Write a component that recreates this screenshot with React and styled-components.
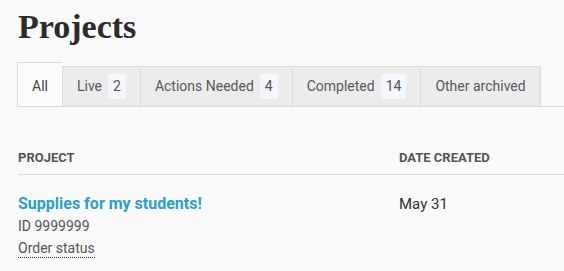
import React from "react";
import styled, { createGlobalStyle } from "styled-components";

const GlobalStyle = createGlobalStyle`
  body {
    margin: 0;
    background: #fafafa;
    font-family: Roboto, "Open Sans", sans-serif;
    color: #555;
  }
`;

const Page = styled.div`
  padding: 0 0 0 18px;
  overflow: hidden;
`;

const Title = styled.h1`
  margin: 0;
  padding-top: 7px;
  font-family: "Liberation Serif", serif;
  font-weight: bold;
  font-size: 34px;
  line-height: 40px;
  color: #2b2b2b;
`;

const Tabs = styled.div`
  display: flex;
  align-items: flex-end;
  margin-top: 15px;
  margin-left: -1px;
  border-bottom: 1px solid #dcdcdc;
`;

const Tab = styled.div`
  box-sizing: border-box;
  height: ${(p) => (p.$active ? "44px" : "40px")};
  padding: ${(p) => (p.$active ? "4px" : "0")} 14px 0;
  border: 1px solid #dcdcdc;
  border-bottom: none;
  border-right: none;
  background: ${(p) => (p.$active ? "#fcfcfc" : "#ececec")};
  color: ${(p) => (p.$active ? "#444" : "#585858")};
  font-size: 14px;
  line-height: 39px;
  white-space: nowrap;
  cursor: pointer;

  &:last-child {
    border-right: 1px solid #dcdcdc;
  }
`;

const Badge = styled.span`
  display: inline-block;
  margin-left: 6px;
  padding: 0 5px;
  line-height: 25px;
  border-radius: 2px;
  background: #f4f8fc;
  color: #555;
  vertical-align: middle;
  position: relative;
  top: -1px;
`;

const Table = styled.div`
  margin-top: 41px;
`;

const Row = styled.div`
  display: grid;
  grid-template-columns: 381px 1fr;
`;

const HeadRow = styled(Row)`
  padding-bottom: 6px;
  border-bottom: 1px solid #dcdcdc;
`;

const HeadCell = styled.div`
  font-size: 13px;
  font-weight: bold;
  line-height: 20px;
  color: #555;
  text-transform: uppercase;
`;

const BodyRow = styled(Row)`
  padding-top: 18px;
`;

const ProjectName = styled.a`
  display: block;
  font-size: 16px;
  font-weight: bold;
  line-height: 22px;
  color: #2a9fd6;
  text-decoration: none;
`;

const Meta = styled.div`
  font-size: 14px;
  line-height: 22px;
  color: #555;
`;

const StatusLink = styled.span`
  padding-bottom: 1px;
  border-bottom: 1px dotted #333;
  cursor: pointer;
`;

const DateCell = styled.div`
  font-size: 15px;
  line-height: 22px;
  color: #333;
`;

const tabs = [
  { label: "All", active: true },
  { label: "Live", count: 2 },
  { label: "Actions Needed", count: 4 },
  { label: "Completed", count: 14 },
  { label: "Other archived" },
];

export default function App() {
  return (
    <>
      <GlobalStyle />
      <Page>
        <Title>Projects</Title>
        <Tabs>
          {tabs.map((t) => (
            <Tab key={t.label} $active={t.active}>
              {t.label}
              {t.count != null && <Badge>{t.count}</Badge>}
            </Tab>
          ))}
        </Tabs>
        <Table>
          <HeadRow>
            <HeadCell>Project</HeadCell>
            <HeadCell>Date created</HeadCell>
          </HeadRow>
          <BodyRow>
            <div>
              <ProjectName href="#">Supplies for my students!</ProjectName>
              <Meta>ID 9999999</Meta>
              <Meta>
                <StatusLink>Order status</StatusLink>
              </Meta>
            </div>
            <DateCell>May 31</DateCell>
          </BodyRow>
        </Table>
      </Page>
    </>
  );
}
